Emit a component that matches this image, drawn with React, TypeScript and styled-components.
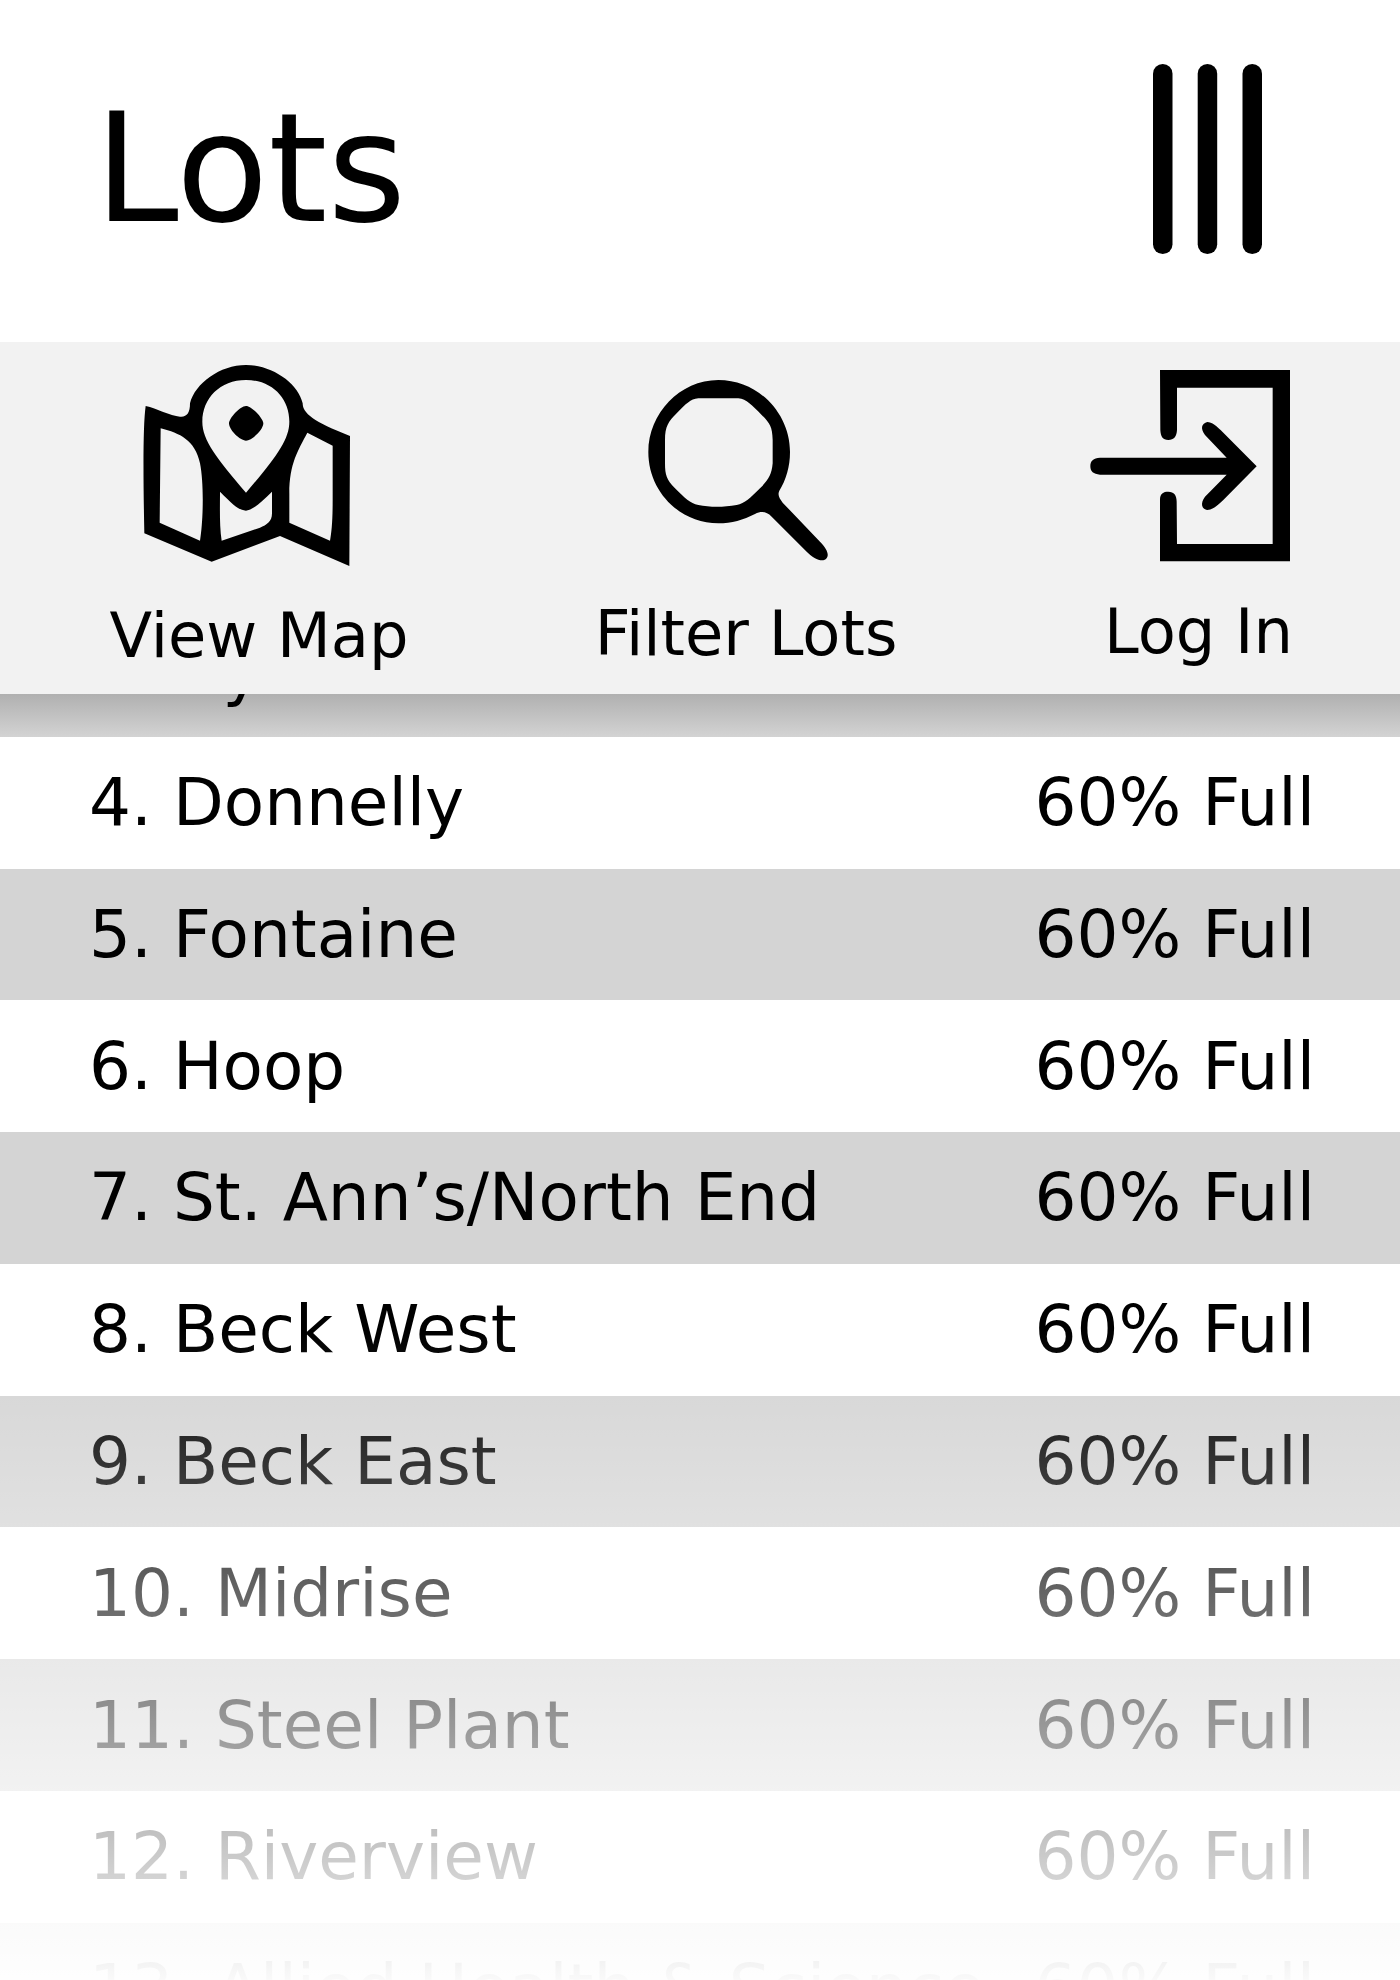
import React from "react";
import styled, { createGlobalStyle } from "styled-components";

const Global = createGlobalStyle`
  html, body { margin: 0; padding: 0; background: #fff; }
`;

const Page = styled.div`
  position: relative;
  width: 1400px;
  height: 1980px;
  overflow: hidden;
  background: #fff;
  color: #000;
  font-family: "DejaVu Sans", sans-serif;
`;

const Header = styled.header`
  height: 342px;
  box-sizing: border-box;
  display: flex;
  justify-content: space-between;
  padding: 64px 138px 0 94.5px;
`;

const Title = styled.h1`
  margin: 0;
  padding-top: 30px;
  font-size: 151px;
  font-weight: 400;
  line-height: 151px;
`;

const MenuIcon = styled.svg`
  width: 109px;
  height: 190px;
  display: block;
`;

const Toolbar = styled.nav`
  position: relative;
  z-index: 2;
  height: 352px;
  background: #f2f2f2;
  display: grid;
  grid-template-columns: 518px 456px 426px;
`;

const ToolItem = styled.div<{ $top: number; $shift: number; $pad?: number }>`
  display: flex;
  flex-direction: column;
  align-items: center;
  padding-top: ${(p) => p.$top}px;
  padding-left: ${(p) => p.$pad ?? 0}px;
  svg {
    display: block;
    margin-right: ${(p) => p.$shift}px;
  }
`;

const ToolLabel = styled.span<{ $gap: number }>`
  margin-top: ${(p) => p.$gap}px;
  font-size: 62.3px;
  line-height: 62.3px;
  white-space: nowrap;
`;

const List = styled.ul`
  margin: 0;
  padding: 0;
  list-style: none;
  overflow: hidden;
`;

const Row = styled.li<{ $shade?: boolean; $under?: boolean }>`
  height: 131.8px;
  box-sizing: border-box;
  padding: 0 85px 0 89px;
  display: flex;
  align-items: center;
  justify-content: space-between;
  font-size: 66px;
  white-space: nowrap;
  background: ${(p) =>
    p.$under
      ? "linear-gradient(to bottom, #b0b0b0 89px, #d3d3d3 131.8px)"
      : p.$shade
      ? "#d4d4d4"
      : "#fff"};
  &:first-child {
    margin-top: -89.1px;
  }
`;

const Fade = styled.div`
  position: absolute;
  left: 0;
  right: 0;
  bottom: 0;
  height: 650px;
  pointer-events: none;
  background: linear-gradient(to bottom, rgba(255, 255, 255, 0), rgba(255, 255, 255, 0.98));
`;

const lots = [
  "3. Hy",
  "4. Donnelly",
  "5. Fontaine",
  "6. Hoop",
  "7. St. Ann’s/North End",
  "8. Beck West",
  "9. Beck East",
  "10. Midrise",
  "11. Steel Plant",
  "12. Riverview",
  "13. Allied Health & Science",
];

const MapIcon = () => (
  <svg width="240" height="240" viewBox="0 0 720 720">
    <path
      fillRule="evenodd"
      d="M77 168 C110 175 150 198 180 200 C200 202 210 190 210 160 C225 100 300 45 378 45 C456 45 535 100 548 160 C548 190 580 215 690 258 L688 648 L480 558 L275 635 L73 550 C70 400 68 230 77 168 Z
      M378 90 C300 90 247 145 247 215 C247 270 290 325 378 428 C466 325 508 270 508 215 C508 145 456 90 378 90 Z
      M378 168 C395 168 430 205 430 220 C430 240 395 272 378 272 C360 272 327 240 327 220 C327 205 360 168 378 168 Z
      M122 235 C180 250 225 270 240 340 C252 400 250 510 240 572 L119 518 Z
      M300 425 C340 465 355 480 378 482 C400 480 425 455 456 425 L456 490 C456 515 440 525 420 533 L305 572 C298 530 300 470 300 425 Z
      M562 248 L638 287 L638 450 C638 510 635 545 630 572 L508 518 L508 430 C508 340 535 300 562 248 Z"
    />
  </svg>
);

const SearchIcon = () => (
  <svg width="220" height="220" viewBox="0 0 660 660">
    <path
      fillRule="evenodd"
      d="M265 60 C385 60 480 160 480 276 C480 320 468 360 448 392 C442 405 448 415 458 428 L570 545 C590 565 600 585 588 597 C575 608 550 595 530 575 L425 470 C410 455 395 452 375 462 C340 480 305 490 265 490 C150 490 55 395 55 276 C55 160 150 60 265 60 Z
      M205 115 L325 115 C350 118 365 135 395 165 C420 190 427 200 428 240 L428 310 C425 345 415 360 390 385 C360 415 345 430 320 435 C280 442 240 442 205 435 C180 430 165 415 135 385 C110 360 105 345 105 310 L105 240 C105 200 115 185 140 160 C170 130 180 118 205 115 Z"
    />
  </svg>
);

const LoginIcon = () => (
  <svg width="220" height="220" viewBox="0 0 660 660">
    <path d="M240 30 L630 30 L630 604 L240 604 L240 420 C240 400 250 395 265 395 C282 395 290 405 290 425 L291 552 L578 552 L578 83 L291 83 L291 210 C290 230 282 240 265 240 C248 240 242 230 241 210 Z" />
    <path d="M60 293 L440 293 L375 225 C360 205 365 190 382 186 C395 186 410 198 430 218 L530 319 L430 420 C410 440 395 450 382 450 C365 447 360 430 375 410 L440 344 L60 344 C40 342 31 335 31 319 C31 302 40 295 60 293 Z" />
  </svg>
);

export default function App() {
  return (
    <Page>
      <Global />
      <Header>
        <Title>Lots</Title>
        <MenuIcon viewBox="0 0 109 190">
          <rect x="0" y="0" width="19.5" height="190" rx="9.75" />
          <rect x="44.7" y="0" width="19.5" height="190" rx="9.75" />
          <rect x="89.5" y="0" width="19.5" height="190" rx="9.75" />
        </MenuIcon>
      </Header>
      <Toolbar>
        <ToolItem $top={8} $shift={38}>
          <MapIcon />
          <ToolLabel $gap={15}>View Map</ToolLabel>
        </ToolItem>
        <ToolItem $top={18} $shift={12}>
          <SearchIcon />
          <ToolLabel $gap={22.5}>Filter Lots</ToolLabel>
        </ToolItem>
        <ToolItem $top={18} $shift={18} $pad={23}>
          <LoginIcon />
          <ToolLabel $gap={20.5}>Log In</ToolLabel>
        </ToolItem>
      </Toolbar>
      <List>
        {lots.map((name, i) => (
          <Row key={name} $shade={i % 2 === 0} $under={i === 0}>
            <span>{name}</span>
            <span>60% Full</span>
          </Row>
        ))}
      </List>
      <Fade />
    </Page>
  );
}
